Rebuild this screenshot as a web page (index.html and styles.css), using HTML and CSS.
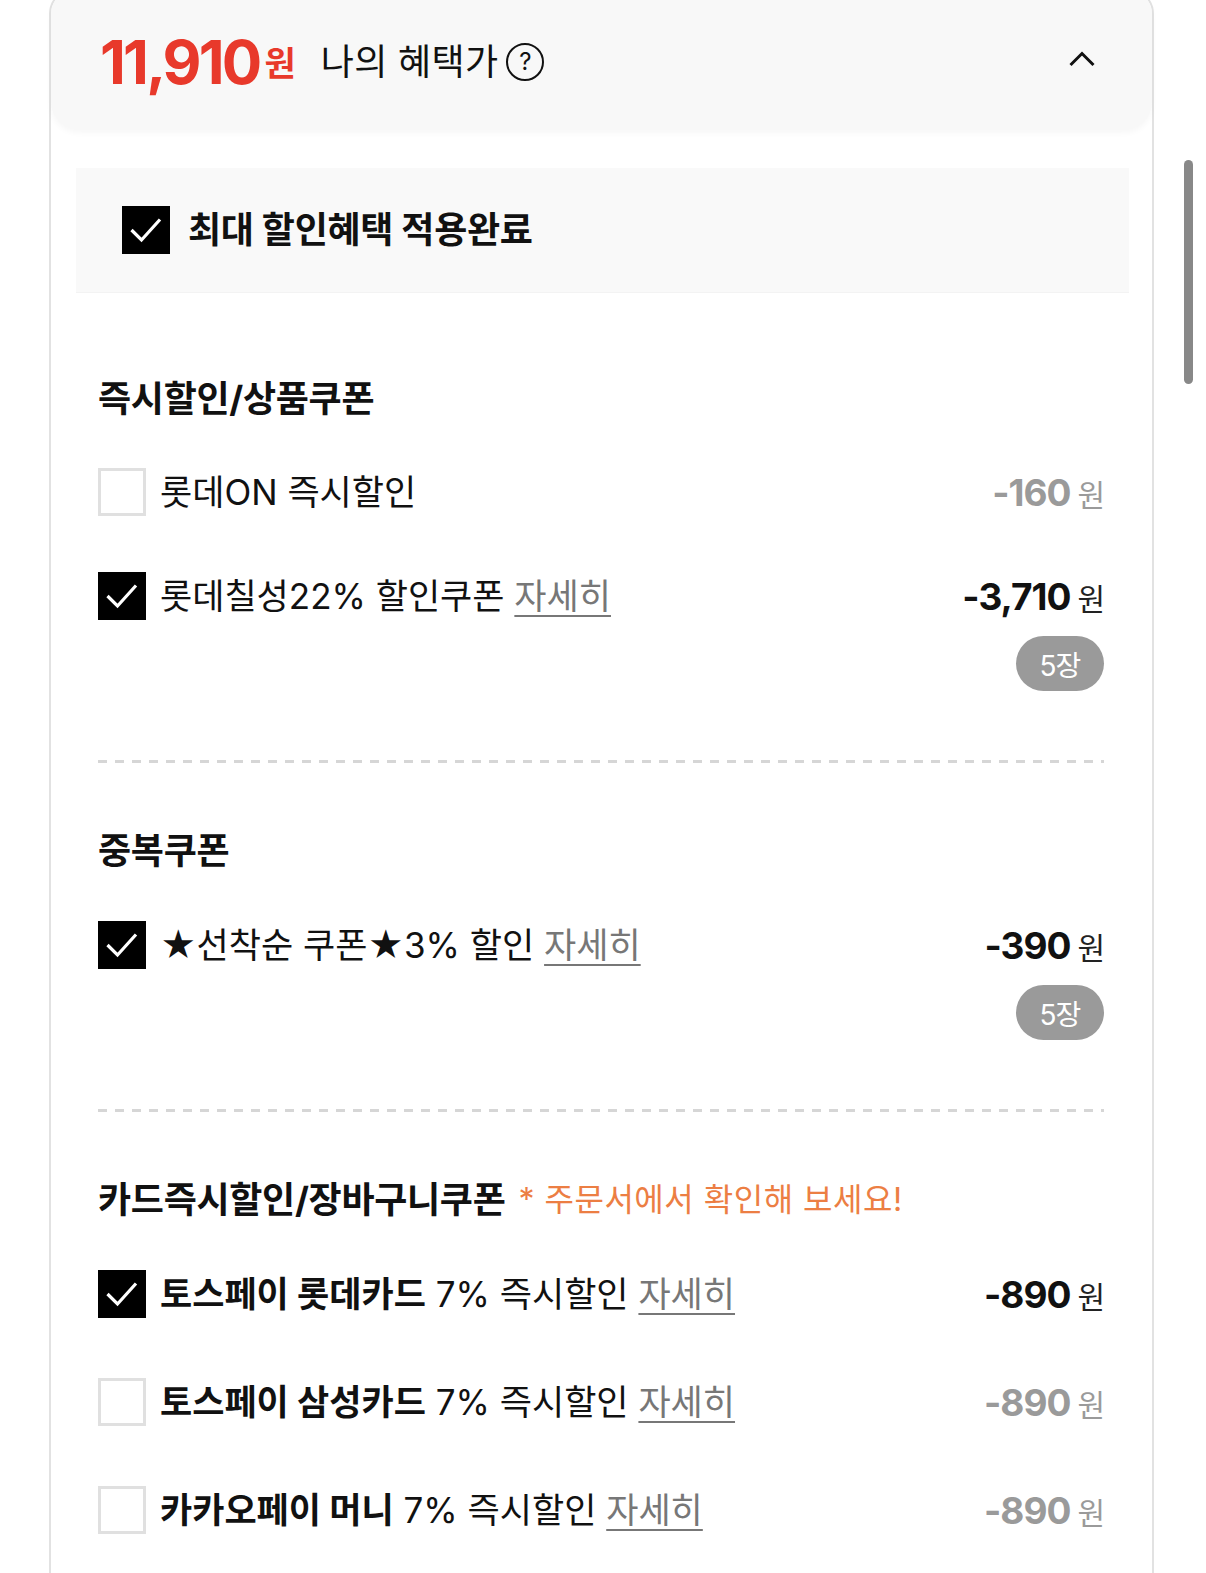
FILE: index.html
```html
<!DOCTYPE html>
<html lang="ko">
<head>
<meta charset="utf-8">
<title>나의 혜택가</title>
<link rel="stylesheet" href="styles.css">
</head>
<body>
<div class="card">
  <div class="header">
    <div class="price-main"><span class="pm-num">11,910</span><span class="pm-won">원</span></div>
    <div class="header-label">나의 혜택가</div>
    <span class="qmark">?</span>
    <svg class="chevron" width="26" height="16" viewBox="0 0 26 16"><polyline points="1.5,14 13,2.5 24.5,14" fill="none" stroke="#111" stroke-width="3"/></svg>
  </div>

  <div class="banner">
    <span class="cb cb-on"><svg width="48" height="48" viewBox="0 0 48 48"><polyline points="9.5,24 19.5,34 38,13.5" fill="none" stroke="#fff" stroke-width="3.2"/></svg></span>
    <span class="banner-text">최대 할인혜택 적용완료</span>
  </div>

  <section class="sec sec-first">
    <h2 class="sec-title">즉시할인/상품쿠폰</h2>
    <div class="list list-first gap56">
      <div class="item">
        <div class="row">
          <span class="cb cb-off"></span>
          <span class="label">롯데ON 즉시할인</span>
          <span class="amt off"><b>-160</b><i>원</i></span>
        </div>
      </div>
      <div class="item">
        <div class="row">
          <span class="cb cb-on"><svg width="48" height="48" viewBox="0 0 48 48"><polyline points="9.5,24 19.5,34 38,13.5" fill="none" stroke="#fff" stroke-width="3.2"/></svg></span>
          <span class="label">롯데칠성22% 할인쿠폰 <a class="more">자세히</a></span>
          <span class="amt"><b>-3,710</b><i>원</i></span>
        </div>
        <span class="badge">5장</span>
      </div>
    </div>
  </section>

  <section class="sec">
    <h2 class="sec-title">중복쿠폰</h2>
    <div class="list">
      <div class="item">
        <div class="row">
          <span class="cb cb-on"><svg width="48" height="48" viewBox="0 0 48 48"><polyline points="9.5,24 19.5,34 38,13.5" fill="none" stroke="#fff" stroke-width="3.2"/></svg></span>
          <span class="label">★선착순 쿠폰★3% 할인 <a class="more">자세히</a></span>
          <span class="amt"><b>-390</b><i>원</i></span>
        </div>
        <span class="badge">5장</span>
      </div>
    </div>
  </section>

  <section class="sec sec-last">
    <h2 class="sec-title">카드즉시할인/장바구니쿠폰 <span class="note">* 주문서에서 확인해 보세요!</span></h2>
    <div class="list gap60">
      <div class="item">
        <div class="row">
          <span class="cb cb-on"><svg width="48" height="48" viewBox="0 0 48 48"><polyline points="9.5,24 19.5,34 38,13.5" fill="none" stroke="#fff" stroke-width="3.2"/></svg></span>
          <span class="label"><strong>토스페이 롯데카드</strong> 7% 즉시할인 <a class="more">자세히</a></span>
          <span class="amt"><b>-890</b><i>원</i></span>
        </div>
      </div>
      <div class="item">
        <div class="row">
          <span class="cb cb-off"></span>
          <span class="label"><strong>토스페이 삼성카드</strong> 7% 즉시할인 <a class="more">자세히</a></span>
          <span class="amt off"><b>-890</b><i>원</i></span>
        </div>
      </div>
      <div class="item">
        <div class="row">
          <span class="cb cb-off"></span>
          <span class="label"><strong>카카오페이 머니</strong> 7% 즉시할인 <a class="more">자세히</a></span>
          <span class="amt off"><b>-890</b><i>원</i></span>
        </div>
      </div>
    </div>
  </section>
</div>
<div class="scrollbar"></div>
</body>
</html>
```

FILE: styles.css
```css
* { box-sizing: border-box; }
html, body { margin: 0; padding: 0; background: #fff; }
body {
  font-family: Inter, "Noto Sans CJK KR", sans-serif;
  color: #111;
  overflow: hidden;
}
.card {
  margin: -12px 0 0 49px;
  width: 1105px;
  min-height: 1640px;
  border: 2px solid #e2e2e2;
  border-radius: 26px 26px 0 0;
  background: #fff;
}
.header {
  height: 140px;
  padding: 4px 57px 0 49px;
  display: flex;
  align-items: center;
  background: #f8f8f8;
  border-radius: 24px 24px 28px 28px;
  box-shadow: 0 3px 6px rgba(0,0,0,0.035);
}
.price-main {
  display: flex;
  align-items: center;
  color: #e8392b;
  font-weight: 700;
}
.pm-num {
  font-size: 60px;
  letter-spacing: -2.8px;
  line-height: 1;
}
.pm-won {
  font-size: 34px;
  margin-left: 5px;
  margin-top: 4px;
  letter-spacing: -1px;
  line-height: 1;
}
.header-label {
  margin-left: 26px;
  font-size: 36px;
  letter-spacing: 0.3px;
  line-height: 1;
}
.qmark {
  margin-left: 8px;
  width: 38px;
  height: 38px;
  border: 2.5px solid #111;
  border-radius: 50%;
  display: flex;
  align-items: center;
  justify-content: center;
  font-size: 24px;
  font-weight: 400;
  line-height: 1;
}
.chevron { margin-left: auto; margin-top: -6px; }

.banner {
  margin: 38px 23px 0 25px;
  height: 125px;
  background: #f9f9f9;
  border-bottom: 1px solid #f3f3f3;
  display: flex;
  align-items: center;
  padding-left: 46px;
  gap: 18px;
}
.banner-text {
  font-size: 36px;
  font-weight: 700;
  letter-spacing: -0.3px;
  line-height: 1;
}

.cb {
  flex: none;
  width: 48px;
  height: 48px;
  display: block;
}
.cb svg { display: block; }
.cb-on { background: #000; }
.cb-off { border: 3px solid #e0e0e0; background: #fff; }

.sec {
  margin: 0 48px 0 47px;
  padding: 61px 0 72px;
  background-image: repeating-linear-gradient(to right, #d6d6d6 0 9px, transparent 9px 17px);
  background-size: 100% 3px;
  background-repeat: no-repeat;
  background-position: left bottom;
}
.sec-first { padding-top: 79px; }
.sec-last { background: none; }
.sec-title {
  margin: 0;
  height: 48px;
  display: flex;
  align-items: center;
  font-size: 36px;
  font-weight: 700;
  letter-spacing: -0.3px;
}
.note {
  margin-left: 13px;
  font-size: 32px;
  font-weight: 400;
  color: #ec7e43;
  letter-spacing: 0.5px;
}
.list {
  margin-top: 49px;
  display: flex;
  flex-direction: column;
  gap: 56px;
}
.list-first { margin-top: 48px; }
.gap56 { gap: 56px; }
.gap60 { gap: 60px; }
.item {
  display: flex;
  flex-direction: column;
}
.row {
  display: flex;
  align-items: center;
  min-height: 48px;
}
.label {
  margin-left: 14px;
  flex: 1;
  font-size: 35px;
  letter-spacing: 0;
  line-height: 1;
  white-space: nowrap;
}
.label strong { font-weight: 700; letter-spacing: 0; }
.more {
  color: #777;
  text-decoration: underline;
  text-decoration-thickness: 2px;
  text-underline-offset: 6px;
}
.amt {
  display: flex;
  align-items: baseline;
  gap: 7px;
  color: #111;
}
.amt b {
  font-size: 37px;
  font-weight: 700;
  letter-spacing: -1px;
  line-height: 1;
}
.amt i {
  font-style: normal;
  font-size: 30px;
  letter-spacing: -1px;
  line-height: 1;
  color: #222;
}
.amt.off b, .amt.off i { color: #9a9a9a; }
.badge {
  align-self: flex-end;
  margin-top: 16px;
  width: 88px;
  height: 55px;
  border-radius: 28px;
  background: #9a9a9a;
  color: #fff;
  font-size: 28px;
  letter-spacing: -1px;
  display: flex;
  align-items: center;
  justify-content: center;
}
.scrollbar {
  position: fixed;
  left: 1184px;
  top: 160px;
  width: 9px;
  height: 224px;
  border-radius: 5px;
  background: #888;
}
```
